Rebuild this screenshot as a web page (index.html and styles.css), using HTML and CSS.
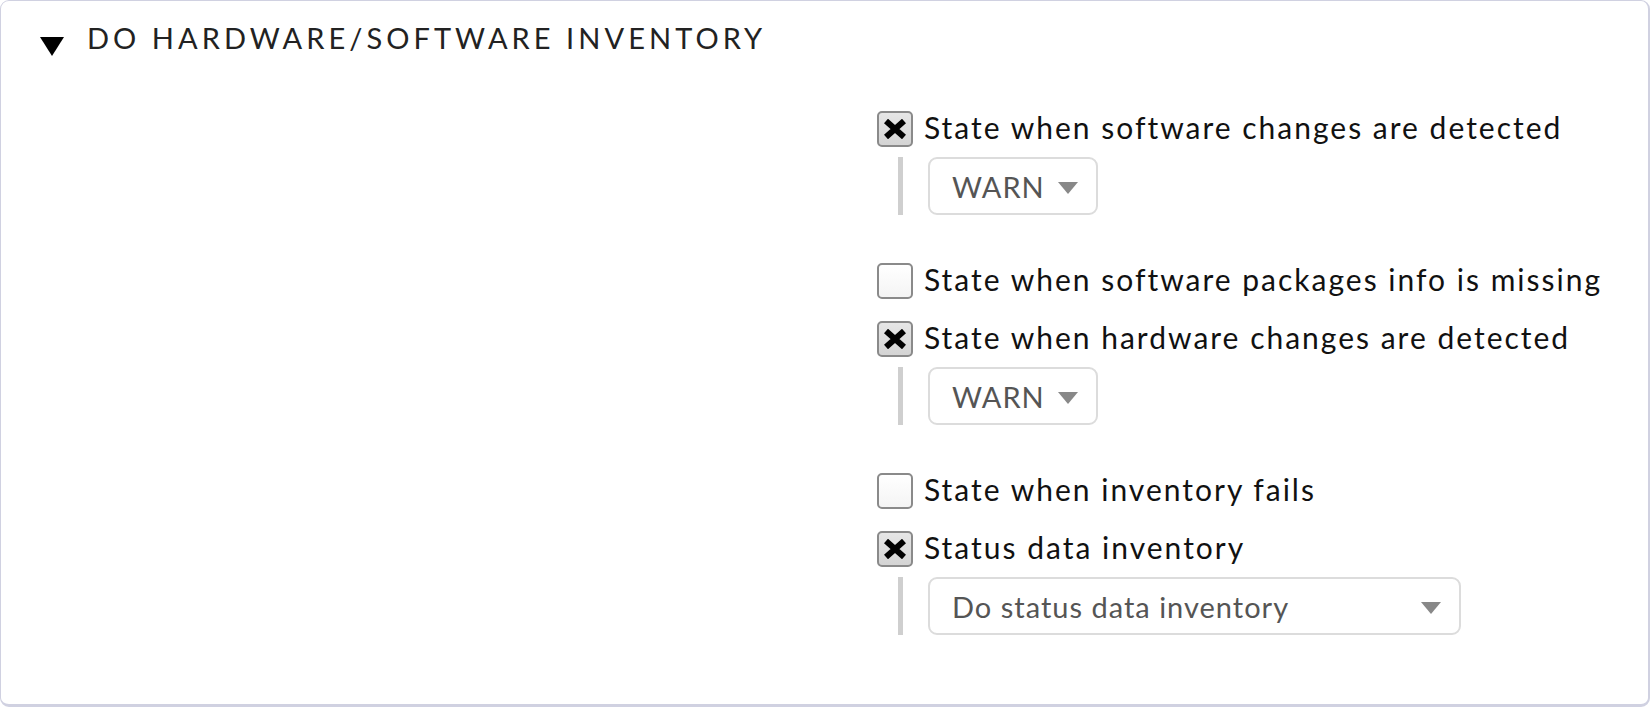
FILE: index.html
```html
<!DOCTYPE html>
<html>
<head>
<meta charset="utf-8">
<link rel="stylesheet" href="styles.css">
</head>
<body>
<div class="box">
  <div class="head">
    <span class="tri"></span>
    <span class="title">DO HARDWARE/SOFTWARE INVENTORY</span>
  </div>
  <div class="form">
    <div class="legend"></div>
    <div class="fields">
      <div class="item">
        <div class="row"><span class="cb on"><svg viewBox="0 0 24 20" width="24" height="20"><path d="M3 2 L21 18 M21 2 L3 18" stroke="#000" stroke-width="6"/></svg></span><span class="label">State when software changes are detected</span></div>
        <div class="sub"><div class="sel sel-s"><span>WARN</span><span class="arr"></span></div></div>
      </div>
      <div class="item">
        <div class="row"><span class="cb"></span><span class="label">State when software packages info is missing</span></div>
      </div>
      <div class="item">
        <div class="row"><span class="cb on"><svg viewBox="0 0 24 20" width="24" height="20"><path d="M3 2 L21 18 M21 2 L3 18" stroke="#000" stroke-width="6"/></svg></span><span class="label">State when hardware changes are detected</span></div>
        <div class="sub"><div class="sel sel-s"><span>WARN</span><span class="arr"></span></div></div>
      </div>
      <div class="item">
        <div class="row"><span class="cb"></span><span class="label">State when inventory fails</span></div>
      </div>
      <div class="item">
        <div class="row"><span class="cb on"><svg viewBox="0 0 24 20" width="24" height="20"><path d="M3 2 L21 18 M21 2 L3 18" stroke="#000" stroke-width="6"/></svg></span><span class="label">Status data inventory</span></div>
        <div class="sub"><div class="sel sel-l"><span>Do status data inventory</span><span class="arr"></span></div></div>
      </div>
    </div>
  </div>
</div>
</body>
</html>
```

FILE: styles.css
```css
html, body {
  margin: 0;
  padding: 0;
  background: #fff;
}
body {
  font-family: Lato, "Open Sans", sans-serif;
}
.box {
  box-sizing: border-box;
  width: 1650px;
  height: 707px;
  border: 1px solid #d0d1e1;
  border-right-width: 2px;
  border-bottom-width: 3px;
  border-radius: 9px;
  background: #fff;
}
.head {
  display: flex;
  align-items: center;
  padding: 16px 0 0 39px;
  height: 40px;
}
.tri {
  width: 0;
  height: 0;
  border-left: 12px solid transparent;
  border-right: 12px solid transparent;
  border-top: 19px solid #000;
  margin-top: 18px;
  margin-right: 23px;
}
.title {
  font-size: 29px;
  letter-spacing: 4.05px;
  color: #222;
}
.form {
  display: grid;
  grid-template-columns: 876px 1fr;
  padding-top: 54px;
}
.fields {
  display: flex;
  flex-direction: column;
}
.item {
  margin-bottom: 22px;
}
.row {
  display: flex;
  align-items: center;
  height: 36px;
}
.cb {
  box-sizing: border-box;
  width: 36px;
  height: 36px;
  border: 2px solid #8a8a8a;
  border-radius: 5px;
  background: linear-gradient(#fff, #f4f4f4);
  display: flex;
  align-items: center;
  justify-content: center;
  margin-right: 11px;
  flex: none;
}
.cb.on {
  background: linear-gradient(#e6e6e6, #d4d4d4);
}
.label {
  font-size: 30px;
  letter-spacing: 2px;
  color: #111;
  padding-bottom: 4px;
}
.sub {
  margin-top: 10px;
  margin-bottom: 26px;
  padding-left: 25px;
  border-left: 5px solid #cfcfcf;
  margin-left: 21px;
  height: 58px;
}
.sel {
  box-sizing: border-box;
  height: 58px;
  border: 2px solid #dcdcdc;
  border-radius: 9px;
  display: flex;
  align-items: center;
  justify-content: space-between;
  padding: 0 18px 0 22px;
  font-size: 29px;
  letter-spacing: 1px;
  color: #555;
}
.sel-s { width: 170px; }
.sel-l { width: 533px; }
.arr {
  width: 0;
  height: 0;
  border-left: 10px solid transparent;
  border-right: 10px solid transparent;
  border-top: 12px solid #888;
  margin-top: 3px;
}
```
